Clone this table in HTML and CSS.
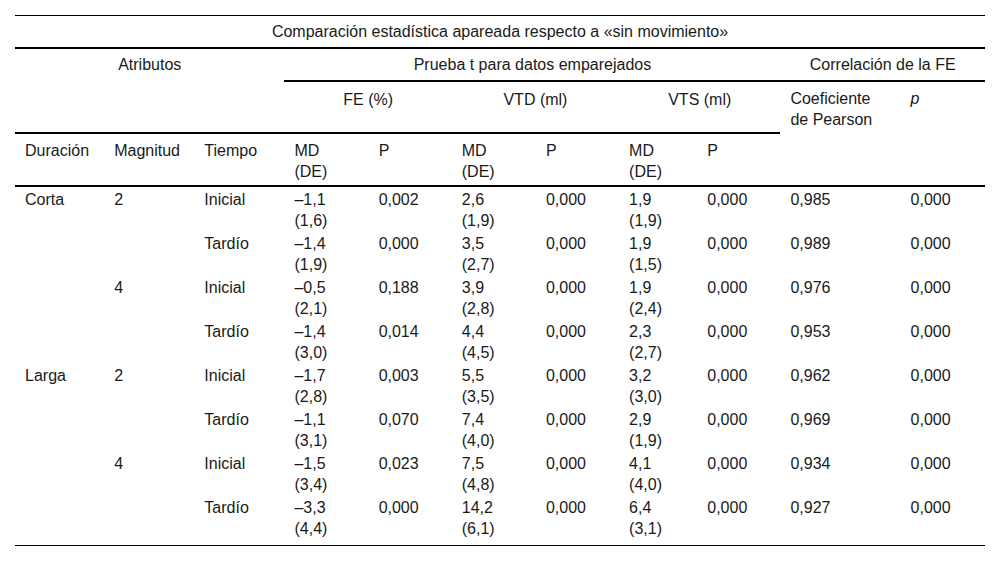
FILE: index.html
```html
<!DOCTYPE html>
<html lang="es">
<head>
<meta charset="utf-8">
<title>Comparación estadística</title>
<link rel="stylesheet" href="styles.css">
</head>
<body>
<div class="page">
<table class="stats">
  <colgroup>
    <col class="c-dur"><col class="c-mag"><col class="c-tie">
    <col class="c-md"><col class="c-p">
    <col class="c-md"><col class="c-p">
    <col class="c-md2"><col class="c-p">
    <col class="c-coef"><col class="c-pp">
  </colgroup>
  <thead>
    <tr class="h1">
      <th colspan="11" class="title">Comparación estadística apareada respecto a «sin movimiento»</th>
    </tr>
    <tr class="h2">
      <th colspan="3" rowspan="2" class="group attr">Atributos</th>
      <th colspan="6" class="group">Prueba t para datos emparejados</th>
      <th colspan="2" class="group">Correlación de la FE</th>
    </tr>
    <tr class="h3">
      <th colspan="2" class="group sub">FE (%)</th>
      <th colspan="2" class="group sub">VTD (ml)</th>
      <th colspan="2" class="group sub">VTS (ml)</th>
      <th rowspan="2" class="left corr">Coeficiente<br>de Pearson</th>
      <th rowspan="2" class="left corr"><i>p</i></th>
    </tr>
    <tr class="h4">
      <th class="left">Duración</th>
      <th class="left">Magnitud</th>
      <th class="left">Tiempo</th>
      <th class="left">MD<br>(DE)</th>
      <th class="left">P</th>
      <th class="left">MD<br>(DE)</th>
      <th class="left">P</th>
      <th class="left">MD<br>(DE)</th>
      <th class="left">P</th>
    </tr>
  </thead>
  <tbody>
    <tr>
      <td rowspan="4">Corta</td><td rowspan="2">2</td><td>Inicial</td>
      <td>–1,1<br>(1,6)</td><td>0,002</td><td>2,6<br>(1,9)</td><td>0,000</td><td>1,9<br>(1,9)</td><td>0,000</td><td>0,985</td><td>0,000</td>
    </tr>
    <tr>
      <td>Tardío</td>
      <td>–1,4<br>(1,9)</td><td>0,000</td><td>3,5<br>(2,7)</td><td>0,000</td><td>1,9<br>(1,5)</td><td>0,000</td><td>0,989</td><td>0,000</td>
    </tr>
    <tr>
      <td rowspan="2">4</td><td>Inicial</td>
      <td>–0,5<br>(2,1)</td><td>0,188</td><td>3,9<br>(2,8)</td><td>0,000</td><td>1,9<br>(2,4)</td><td>0,000</td><td>0,976</td><td>0,000</td>
    </tr>
    <tr>
      <td>Tardío</td>
      <td>–1,4<br>(3,0)</td><td>0,014</td><td>4,4<br>(4,5)</td><td>0,000</td><td>2,3<br>(2,7)</td><td>0,000</td><td>0,953</td><td>0,000</td>
    </tr>
    <tr>
      <td rowspan="4">Larga</td><td rowspan="2">2</td><td>Inicial</td>
      <td>–1,7<br>(2,8)</td><td>0,003</td><td>5,5<br>(3,5)</td><td>0,000</td><td>3,2<br>(3,0)</td><td>0,000</td><td>0,962</td><td>0,000</td>
    </tr>
    <tr>
      <td>Tardío</td>
      <td>–1,1<br>(3,1)</td><td>0,070</td><td>7,4<br>(4,0)</td><td>0,000</td><td>2,9<br>(1,9)</td><td>0,000</td><td>0,969</td><td>0,000</td>
    </tr>
    <tr>
      <td rowspan="2">4</td><td>Inicial</td>
      <td>–1,5<br>(3,4)</td><td>0,023</td><td>7,5<br>(4,8)</td><td>0,000</td><td>4,1<br>(4,0)</td><td>0,000</td><td>0,934</td><td>0,000</td>
    </tr>
    <tr class="last">
      <td>Tardío</td>
      <td>–3,3<br>(4,4)</td><td>0,000</td><td>14,2<br>(6,1)</td><td>0,000</td><td>6,4<br>(3,1)</td><td>0,000</td><td>0,927</td><td>0,000</td>
    </tr>
  </tbody>
</table>
</div>
</body>
</html>
```
FILE: styles.css
```css
html, body {
  margin: 0;
  padding: 0;
  background: #ffffff;
}

.page {
  padding: 15px 15px 0 15px;
}

.stats {
  width: 970px;
  table-layout: fixed;
  border-collapse: separate;
  border-spacing: 0;
  font-family: "Liberation Sans", Arial, sans-serif;
  font-size: 16px;
  line-height: 21px;
  color: #1a1a1a;
  border-top: 1px solid #000;
  border-bottom: 1px solid #000;
}

.c-dur { width: 89px; }
.c-mag { width: 90px; }
.c-tie { width: 90px; }
.c-md { width: 84px; }
.c-p { width: 83px; }
.c-md2 { width: 78px; }
.c-coef { width: 120px; }
.c-pp { width: 84px; }

.stats th,
.stats td {
  padding: 2px 6px 0 10px;
  text-align: left;
  vertical-align: top;
  font-weight: normal;
  white-space: nowrap;
}

.stats th.title {
  text-align: center;
  padding: 5px 10px 5px;
  border-bottom: 2px solid #000;
}

.stats .h2 th {
  padding: 5px 10px 5px;
}

.stats th.group {
  text-align: center;
  border-bottom: 2px solid #000;
}

.stats th.attr {
  padding-top: 5px;
}

.stats .h3 th.sub {
  padding: 7px 10px 22px;
}

.stats th.corr {
  padding: 6px 6px 0 10px;
  border-bottom: 2px solid #000;
}

.stats .h4 th {
  padding: 6px 6px 3px 10px;
  border-bottom: 2px solid #000;
}

.stats tr.last td {
  padding-bottom: 6px;
}
```
